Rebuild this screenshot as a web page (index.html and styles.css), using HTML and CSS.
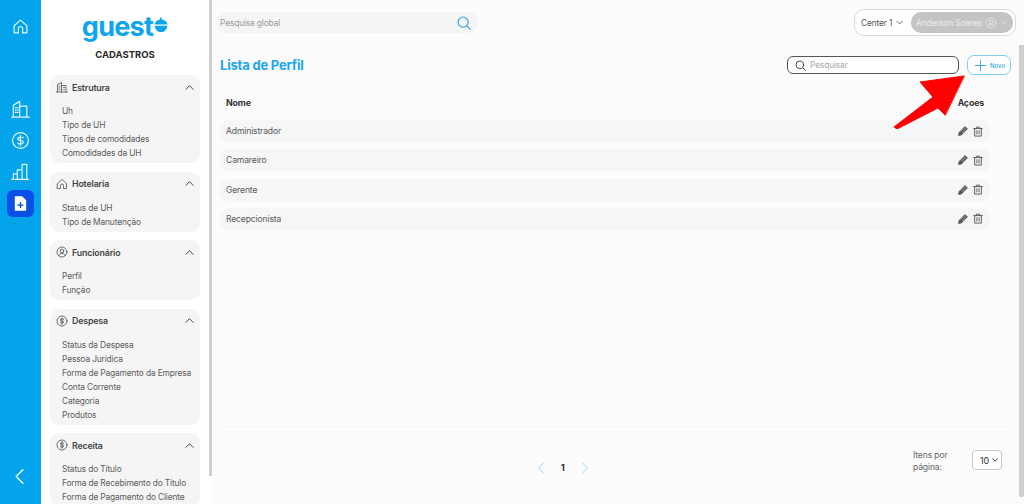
FILE: index.html
```html
<!DOCTYPE html>
<html lang="pt-BR">
<head>
<meta charset="utf-8">
<title>Lista de Perfil</title>
<link rel="stylesheet" href="styles.css">
</head>
<body>
<div class="app">
  <nav class="rail">
    <svg class="rail-icon home" viewBox="0 0 24 24"><path d="M3 11 12 3l9 8v10h-6v-6a3 3 0 0 0-6 0v6H3z"/></svg>
    <div class="rail-group">
      <svg class="rail-icon" viewBox="0 0 24 24"><path d="M1 23h22M3 23V8l8-5v20M11 9h9v14M5.500 11h1M8 11h1M5.500 14h1M8 14h1M5.500 17h1M8 17h1"/></svg>
      <svg class="rail-icon" viewBox="0 0 24 24"><circle cx="12" cy="12" r="10"/><path d="M15.500 8.500c-1-1.300-7-1.500-7 1.500s7 1 7 4-6 3-7 1.300M12 5.500v13"/></svg>
      <svg class="rail-icon" viewBox="0 0 24 24"><path d="M3 22V15h5v7M8 22V10h6v12M14 22V3h6v19M1 22h21"/></svg>
      <div class="rail-active">
        <svg class="doc" viewBox="0 0 16 18"><path class="doc-sheet" d="M1 0h9l5 5v13H1z"/><path class="doc-plus" d="M8 8v6M5 11h6"/></svg>
      </div>
    </div>
    <svg class="rail-back" viewBox="0 0 12 20"><path d="M10 2 2 10l8 8"/></svg>
  </nav>

  <aside class="side">
    <div class="logo"><span>guest</span><svg class="cloche" viewBox="0 0 16 17"><path class="cloche-fill" d="M8 0.500a1.200 1.200 0 0 1 .6 2.200A7.500 7.500 0 0 1 15.500 8.500h-15A7.500 7.500 0 0 1 7.400 2.700 1.200 1.200 0 0 1 8 .5zM.8 10h14.400a7.200 7.200 0 0 1-14.400 0z"/></svg></div>
    <h2 class="side-title">CADASTROS</h2>

    <section class="card">
      <header class="card-head">
        <svg class="card-icon" viewBox="0 0 24 24"><path d="M1 22h22M3 22V7l8-4v19M11 9h9v13M6 10h2M6 14h2M6 18h2M15 13h2M15 17h2"/></svg>
        <span>Estrutura</span>
        <svg class="caret" viewBox="0 0 12 7"><path d="M1 6l5-5 5 5"/></svg>
      </header>
      <ul class="links"><li>Uh</li><li>Tipo de UH</li><li>Tipos de comodidades</li><li>Comodidades da UH</li></ul>
    </section>

    <section class="card">
      <header class="card-head">
        <svg class="card-icon" viewBox="0 0 24 24"><path d="M3 11 12 3l9 8v10h-6v-6a3 3 0 0 0-6 0v6H3z"/></svg>
        <span>Hotelaria</span>
        <svg class="caret" viewBox="0 0 12 7"><path d="M1 6l5-5 5 5"/></svg>
      </header>
      <ul class="links"><li>Status de UH</li><li>Tipo de Manutenção</li></ul>
    </section>

    <section class="card">
      <header class="card-head">
        <svg class="card-icon" viewBox="0 0 24 24"><circle cx="12" cy="12" r="10"/><circle cx="12" cy="10" r="3.500"/><path d="M5.500 19c1-6 12-6 13 0"/></svg>
        <span>Funcionário</span>
        <svg class="caret" viewBox="0 0 12 7"><path d="M1 6l5-5 5 5"/></svg>
      </header>
      <ul class="links"><li>Perfil</li><li>Função</li></ul>
    </section>

    <section class="card">
      <header class="card-head">
        <svg class="card-icon" viewBox="0 0 24 24"><circle cx="12" cy="12" r="10"/><path d="M15.500 8.500c-1-1.300-7-1.500-7 1.500s7 1 7 4-6 3-7 1.300M12 5.500v13"/></svg>
        <span>Despesa</span>
        <svg class="caret" viewBox="0 0 12 7"><path d="M1 6l5-5 5 5"/></svg>
      </header>
      <ul class="links"><li>Status da Despesa</li><li>Pessoa Jurídica</li><li>Forma de Pagamento da Empresa</li><li>Conta Corrente</li><li>Categoria</li><li>Produtos</li></ul>
    </section>

    <section class="card">
      <header class="card-head">
        <svg class="card-icon" viewBox="0 0 24 24"><circle cx="12" cy="12" r="10"/><path d="M15.500 8.500c-1-1.300-7-1.500-7 1.500s7 1 7 4-6 3-7 1.300M12 5.500v13"/></svg>
        <span>Receita</span>
        <svg class="caret" viewBox="0 0 12 7"><path d="M1 6l5-5 5 5"/></svg>
      </header>
      <ul class="links"><li>Status do Título</li><li>Forma de Recebimento do Título</li><li>Forma de Pagamento do Cliente</li></ul>
    </section>
    <div class="side-scroll"></div>
  </aside>

  <main class="main">
    <div class="topbar">
      <div class="global">
        <span>Pesquisa global</span>
        <svg class="global-icon" viewBox="0 0 16 16"><circle cx="7" cy="7" r="5.800"/><path d="m11.500 11.500 3.500 3.500"/></svg>
      </div>
      <div class="account">
        <span class="center">Center 1 <svg class="chev" viewBox="0 0 10 6"><path d="m1 1 4 4 4-4"/></svg></span>
        <span class="user">Anderson Soares
          <svg class="user-icon" viewBox="0 0 24 24"><circle cx="12" cy="12" r="10"/><circle cx="12" cy="10" r="3.500"/><path d="M5.500 19c1-6 12-6 13 0"/></svg>
          <svg class="chev light" viewBox="0 0 10 6"><path d="m1 1 4 4 4-4"/></svg>
        </span>
      </div>
    </div>

    <div class="content">
      <div class="title-row">
        <h1>Lista de Perfil</h1>
        <div class="search">
          <svg class="search-icon" viewBox="0 0 16 16"><circle cx="7" cy="7" r="5.500"/><path d="m11 11 4 4"/></svg>
          <span>Pesquisar</span>
        </div>
        <button class="new" type="button">
          <svg class="plus" viewBox="0 0 12 12"><path d="M6 0v12M0 6h12"/></svg>
          <span>Novo</span>
        </button>
      </div>

      <div class="table-head"><span>Nome</span><span>Açoes</span></div>
      <div class="row"><span>Administrador</span><span class="icons"><svg class="pen" viewBox="0 0 12 12"><path class="pen-body" d="M8.500.5 11.500 3.500 4 11 .4 11.600 1 8z"/><path class="pen-cut" d="M6.900 2.100 9.900 5.100M5.200 3.800 8.200 6.800M3.500 5.500 6.500 8.500"/></svg><svg class="trash" viewBox="0 0 12 12"><path d="M.8 2.500h10.400M4 2.500V.8h4v1.700M2 2.500v9h8v-9M4.700 5v4M7.300 5v4"/></svg></span></div>
      <div class="row"><span>Camareiro</span><span class="icons"><svg class="pen" viewBox="0 0 12 12"><path class="pen-body" d="M8.500.5 11.500 3.500 4 11 .4 11.600 1 8z"/><path class="pen-cut" d="M6.900 2.100 9.900 5.100M5.200 3.800 8.200 6.800M3.500 5.500 6.500 8.500"/></svg><svg class="trash" viewBox="0 0 12 12"><path d="M.8 2.500h10.400M4 2.500V.8h4v1.700M2 2.500v9h8v-9M4.700 5v4M7.300 5v4"/></svg></span></div>
      <div class="row"><span>Gerente</span><span class="icons"><svg class="pen" viewBox="0 0 12 12"><path class="pen-body" d="M8.500.5 11.500 3.500 4 11 .4 11.600 1 8z"/><path class="pen-cut" d="M6.900 2.100 9.900 5.100M5.200 3.800 8.200 6.800M3.500 5.500 6.500 8.500"/></svg><svg class="trash" viewBox="0 0 12 12"><path d="M.8 2.500h10.400M4 2.500V.8h4v1.700M2 2.500v9h8v-9M4.700 5v4M7.300 5v4"/></svg></span></div>
      <div class="row"><span>Recepcionista</span><span class="icons"><svg class="pen" viewBox="0 0 12 12"><path class="pen-body" d="M8.500.5 11.500 3.500 4 11 .4 11.600 1 8z"/><path class="pen-cut" d="M6.900 2.100 9.900 5.100M5.200 3.800 8.200 6.800M3.500 5.500 6.500 8.500"/></svg><svg class="trash" viewBox="0 0 12 12"><path d="M.8 2.500h10.400M4 2.500V.8h4v1.700M2 2.500v9h8v-9M4.700 5v4M7.300 5v4"/></svg></span></div>

      <div class="spacer"></div>
      <footer class="pager">
        <div class="pages">
          <svg class="pg" viewBox="0 0 8 12"><path d="M6.500 1 1.500 6l5 5"/></svg>
          <b>1</b>
          <svg class="pg" viewBox="0 0 8 12"><path d="m1.500 1 5 5-5 5"/></svg>
        </div>
        <div class="per-page">
          <span class="per-label">Itens por página:</span>
          <span class="select">10 <svg class="sel-chev" viewBox="0 0 10 6"><path d="m1 1 4 4 4-4"/></svg></span>
        </div>
      </footer>
    </div>
    <div class="main-scroll"></div>
    <svg class="arrow" viewBox="0 0 76 54"><path d="M72 1 28 7 41 22 2 52 5 54 46 33 53 40z"/></svg>
  </main>
</div>
</body>
</html>
```

FILE: styles.css
```css
* { box-sizing: border-box; }
html, body { margin: 0; height: 100%; overflow: hidden; }
body { font-family: Inter, "Noto Sans", "Liberation Sans", sans-serif; color: #555; background: #fcfcfc; letter-spacing: -.15px; }
svg { display: block; fill: none; stroke-linecap: round; stroke-linejoin: round; }
h1, h2, ul { margin: 0; padding: 0; }

.app { display: flex; width: 1024px; height: 504px; }

.rail { width: 41px; flex: none; height: 504px; background: #03a4ec; display: flex; flex-direction: column; align-items: center; padding-top: 18px; }
.rail-icon { stroke: #e3f5fe; stroke-width: 1.500; }
.rail-icon.home { width: 17px; height: 17px; stroke-width: 1.700; }
.rail-group { margin-top: 64px; display: flex; flex-direction: column; align-items: center; gap: 12.500px; }
.rail-group .rail-icon { width: 19px; height: 19px; }
.rail-active { width: 27px; height: 27px; margin-top: -4px; background: #0a4fe6; border-radius: 6px; display: flex; align-items: center; justify-content: center; }
.doc { width: 13px; height: 15px; }
.doc-sheet { fill: #fff; }
.doc-plus { stroke: #0a4fe6; stroke-width: 1.800; }
.rail-back { width: 11px; height: 17px; margin-top: auto; margin-bottom: 19px; margin-left: -2px; stroke: #fff; stroke-width: 1.500; }

.side { position: relative; width: 171px; flex: none; height: 504px; overflow: hidden; background: #fff; padding: 9px 0 0 9px; }
.logo { width: 150px; height: 36px; display: flex; justify-content: center; align-items: flex-start; font-size: 27px; line-height: 36px; font-weight: 700; letter-spacing: -.7px; color: #0da5ee; }
.cloche { width: 14px; height: 15px; margin: 8px 0 0 1px; }
.cloche-fill { fill: #0da5ee; }
.side-title { width: 150px; margin-top: 3px; text-align: center; font-size: 9.500px; line-height: 13px; font-weight: 700; color: #2b2b2b; letter-spacing: 0; }
.card { width: 150px; margin-bottom: 8.600px; padding: 6px 5px 3px 6px; background: #f5f5f5; border-radius: 9px; }
.side-title + .card { margin-top: 14px; }
.card-head { display: flex; align-items: center; height: 12px; font-size: 8.800px; font-weight: 600; color: #444; }
.card-icon { width: 12px; height: 12px; margin-right: 4px; stroke: #444; stroke-width: 1.500; }
.caret { width: 9px; height: 5px; margin-left: auto; margin-right: 1px; stroke: #333; stroke-width: 1.300; }
.links { list-style: none; margin-top: 11px; padding-left: 6px; }
.links li { font-size: 8.400px; line-height: 14px; color: #5c5c5c; white-space: nowrap; }

.side-scroll { position: absolute; top: 0; right: 0; width: 3px; height: 476px; background: #cfcfcf; }

.main { position: relative; flex: 1; min-width: 0; height: 504px; background: #fcfcfc; }
.topbar { display: flex; justify-content: space-between; padding: 9px 8px 0 4px; }
.global { width: 262px; height: 21px; margin-top: 3px; padding: 0 7px 0 4px; background: #f5f5f5; border-radius: 10px; display: flex; align-items: center; justify-content: space-between; font-size: 8.400px; color: #9a9a9a; }
.global-icon { width: 14px; height: 14px; stroke: #2ea4e6; stroke-width: 1.300; }
.account { width: 162px; height: 27px; padding: 2px; border: 1px solid #d9d9d9; border-radius: 10px; background: #fff; display: flex; align-items: center; justify-content: space-between; font-size: 8.400px; }
.center { display: flex; align-items: center; gap: 4px; margin-left: 4px; color: #555; }
.chev { width: 7px; height: 5px; stroke: #444; stroke-width: 1.100; }
.chev.light { stroke: #e8e8e8; margin-left: 1px; }
.user { width: 102px; height: 21px; padding-left: 5px; border-radius: 10px; background: #c4c4c4; color: #ececec; display: flex; align-items: center; gap: 3px; }
.user-icon { width: 12px; height: 12px; stroke: #ececec; stroke-width: 1.400; }

.content { position: relative; height: 468px; display: flex; flex-direction: column; padding: 0 14px 0 8px; }
.title-row { display: flex; align-items: center; margin-top: 20px; height: 18px; }
h1 { font-size: 13px; font-weight: 700; color: #20a6ee; line-height: 18px; letter-spacing: -.2px; }
.search { width: 172px; height: 18px; margin-left: auto; margin-right: 8px; padding-left: 7px; display: flex; align-items: center; gap: 4px; border: 1px solid #555; border-radius: 6px; font-size: 8.400px; color: #a9a9a9; background: #fff; }
.search-icon { width: 11px; height: 11px; stroke: #333; stroke-width: 1.300; }
.new { width: 44px; height: 20px; margin-right: -1px; padding: 0 0 0 7px; display: flex; align-items: center; gap: 4px; border: 1px solid #7fd0f5; border-radius: 7px; background: #fff; font: 500 6px Inter, sans-serif; color: #2ba5e6; }
.plus { width: 11px; height: 11px; stroke: #2ba5e6; stroke-width: 1; }
.table-head { width: 770px; display: flex; justify-content: space-between; align-items: center; margin-top: 21px; margin-bottom: 11px; height: 14px; padding: 0 6px; font-size: 8.800px; font-weight: 700; color: #333; }
.row { width: 770px; height: 22px; margin-bottom: 7.300px; padding: 0 7px 0 6px; display: flex; align-items: center; justify-content: space-between; background: #f6f6f6; border-radius: 8px; font-size: 8.600px; color: #5a5a5a; }
.icons { display: flex; gap: 5px; align-items: center; }
.pen { width: 10px; height: 10px; }
.pen-body { fill: #555; stroke: #555; stroke-width: .500; }
.pen-cut { stroke: #f6f6f6; stroke-width: .500; }
.trash { width: 10px; height: 11px; stroke: #555; stroke-width: 1.100; }
.spacer { flex: 1; }
.pager { height: 78px; width: 786px; margin-left: 4px; border-top: 1px solid #f5f5f5; display: flex; justify-content: space-between; padding: 22px 8px 0 0; }
.pages { display: flex; align-items: center; height: 40px; margin-top: -1px; margin-left: 313px; font-size: 8.600px; color: #222; }
.pages b { margin: 0 16px; font-weight: 700; }
.pg { width: 8px; height: 12px; stroke: #bfe6f9; stroke-width: 1.100; }
.per-page { display: flex; align-items: flex-start; gap: 7px; font-size: 8.600px; color: #666; }
.per-label { width: 52px; line-height: 12px; }
.select { width: 30px; height: 20px; margin-top: 1px; display: flex; align-items: center; justify-content: space-between; padding: 0 3px 0 7px; border: 1px solid #c8c8c8; border-radius: 4px; font-size: 9px; color: #333; background: #fff; }
.sel-chev { width: 6px; height: 4px; stroke: #222; stroke-width: 1.500; }
.main-scroll { position: absolute; top: 45px; right: 0; width: 5px; height: 452px; background: #cdcdcd; border-radius: 0 0 2px 2px; }
.arrow { position: absolute; left: 680px; top: 75px; width: 76px; height: 54px; fill: #ff0000; stroke: #ff0000; stroke-width: 1; }
```
